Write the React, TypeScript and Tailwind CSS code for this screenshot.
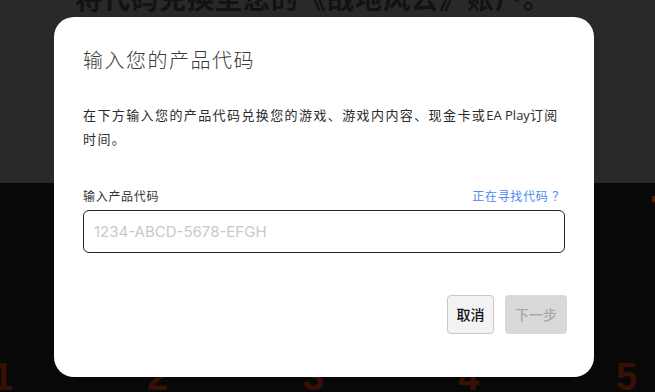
import * as React from "react"

const cjk = "font-['Noto_Sans','Noto_Sans_CJK_SC',sans-serif]"

export default function App() {
  const numbers = [
    { n: "1", cls: "left-[-8px]" },
    { n: "2", cls: "left-[147px]" },
    { n: "3", cls: "left-[303px]" },
    { n: "4", cls: "left-[458px]" },
    { n: "5", cls: "left-[616px]" },
  ]

  return (
    <div className={`relative h-[392px] w-[655px] overflow-hidden ${cjk}`}>
      {/* page behind the dialog */}
      <div className="flex h-[183px] flex-col bg-[#28292b] px-[75px]">
        <h1 className="-mt-[19px] text-[27px] font-bold leading-[36px] tracking-[1px] text-[#121212]">
          将代码兑换至您的《战地风云》账户。
        </h1>
      </div>
      <div className="relative h-[209px] bg-[#080808]">
        {numbers.map((item) => (
          <span
            key={item.n}
            className={`absolute top-[173px] font-['Liberation_Sans',sans-serif] text-[38px] font-bold leading-[42px] text-[#381005] ${item.cls}`}
          >
            {item.n}
          </span>
        ))}
        <span className="absolute left-[652px] top-[13px] h-[6px] w-[3px] bg-[#5a1a06]" />
      </div>

      {/* dialog */}
      <div className="absolute left-[54px] top-[17px] flex h-[360px] w-[540px] flex-col rounded-[20px] bg-white pl-[29px] pr-[27px] pt-[30px]">
        <h2 className="text-[20px] font-light leading-[28px] tracking-[1.5px] text-[#3a3a3a]">
          输入您的产品代码
        </h2>
        <p className="mt-[28px] pr-[2px] text-[13px] leading-[24px] tracking-[1.4px] text-[#2a2a2a]">
          在下方输入您的产品代码兑换您的游戏、游戏内内容、现金卡或
          <span className="font-['Open_Sans',sans-serif] tracking-normal">EA Play</span>订阅时间。
        </p>
        <div className="mt-[37px] flex items-center justify-between pr-[2px]">
          <label className="text-[12px] leading-[18px] tracking-[0.7px] text-[#333]">输入产品代码</label>
          <a className="text-[12px] leading-[18px] tracking-[0.7px] text-[#4d8af0]">正在寻找代码 ？</a>
        </div>
        <input
          className="mt-[4px] h-[43px] w-[482px] rounded-[6px] border border-[#222] px-[10px] font-['Inter',sans-serif] text-[15px] text-[#333] outline-none placeholder:text-[#c9c9c9]"
          placeholder="1234-ABCD-5678-EFGH"
        />
        <div className="mt-[42px] flex justify-end gap-[11px]">
          <button className="h-[39px] w-[47px] rounded-[4px] border border-[#c8c8c8] bg-[#f3f3f3] text-[14px] font-medium text-[#111]">
            取消
          </button>
          <button className="h-[39px] w-[62px] rounded-[4px] bg-[#d9d9d9] text-[14px] font-medium text-[#a9a9a9]">
            下一步
          </button>
        </div>
      </div>
    </div>
  )
}
